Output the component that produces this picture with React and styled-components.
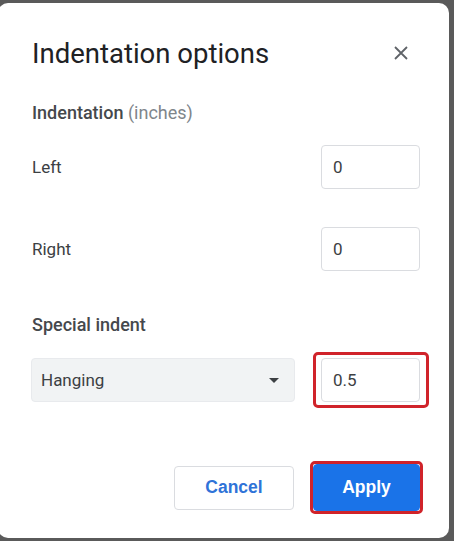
import styled, { createGlobalStyle } from 'styled-components'

const Global = createGlobalStyle`
  html, body {
    margin: 0;
    background: #5a5a5a;
    font-family: Roboto, "Liberation Sans", Arial, sans-serif;
  }
`

const Page = styled.div`
  width: 454px;
  height: 541px;
  overflow: hidden;
  padding-top: 3px;
  box-sizing: border-box;
`

const Dialog = styled.div`
  margin-left: -2px;
  width: 451px;
  height: 535px;
  background: #fff;
  border-radius: 10px;
  box-sizing: border-box;
  padding: 34px 29px 0 34px;
  display: flex;
  flex-direction: column;
`

const Header = styled.div`
  display: flex;
  align-items: center;
  justify-content: space-between;
  height: 32px;
`

const Title = styled.h1`
  margin: 0;
  font-size: 27.5px;
  font-weight: 400;
  color: #202124;
`

const Close = styled.button`
  border: 0;
  background: none;
  padding: 0;
  margin-right: 12px;
  width: 14px;
  height: 14px;
  display: flex;
`

const SectionLabel = styled.div`
  margin-top: ${(p) => p.$top}px;
  font-size: 18px;
  font-weight: 500;
  color: #45484c;

  span {
    font-weight: 400;
    color: #80868b;
  }
`

const Row = styled.div`
  display: flex;
  align-items: center;
  justify-content: space-between;
  margin-top: ${(p) => p.$top}px;
  height: 44px;
`

const Label = styled.div`
  font-size: 17px;
  color: #3c4043;
`

const Field = styled.div`
  width: 99px;
  height: 44px;
  box-sizing: border-box;
  border: 1px solid #dadce0;
  border-radius: 4px;
  padding-left: 11px;
  display: flex;
  align-items: center;
  font-size: 17px;
  color: #3c4043;
  background: #fff;
`

const Highlight = styled.div`
  border: 3px solid #d0232a;
  border-radius: 5px;
  display: flex;
  padding: ${(p) => (p.$tight ? '0' : '3px 6px 3px 5px')};
  margin: ${(p) => (p.$tight ? '-3px -3px -3px 0' : '-6px -9px -6px 0')};
`

const Select = styled.div`
  width: 264px;
  height: 44px;
  box-sizing: border-box;
  margin-left: -1px;
  background: #f1f3f4;
  border: 1px solid #e8eaed;
  border-radius: 4px;
  display: flex;
  align-items: center;
  justify-content: space-between;
  padding: 0 15px 0 9px;
  font-size: 17px;
  color: #3c4043;
`

const Caret = styled.span`
  width: 0;
  height: 0;
  border-left: 5px solid transparent;
  border-right: 5px solid transparent;
  border-top: 5px solid #3c4043;
`

const Footer = styled.div`
  margin-top: auto;
  margin-bottom: 27px;
  display: flex;
  justify-content: flex-end;
  align-items: center;
  gap: 16px;
`

const Button = styled.button`
  height: ${(p) => (p.$primary ? 47 : 44)}px;
  width: ${(p) => (p.$primary ? 107 : 120)}px;
  box-sizing: border-box;
  border-radius: 4px;
  border: 1px solid ${(p) => (p.$primary ? '#1a73e8' : '#dadce0')};
  background: ${(p) => (p.$primary ? '#1a73e8' : '#fff')};
  color: ${(p) => (p.$primary ? '#fff' : '#2f73d8')};
  font-family: "Liberation Sans", Arial, sans-serif;
  font-weight: 700;
  font-size: 17.5px;
  padding: 0;
`

export default function App() {
  return (
    <Page>
      <Global />
      <Dialog>
        <Header>
          <Title>Indentation options</Title>
          <Close aria-label="Close">
            <svg width="14" height="14" viewBox="0 0 14 14">
              <path d="M1 1L13 13M13 1L1 13" stroke="#5f6368" strokeWidth="1.8" />
            </svg>
          </Close>
        </Header>

        <SectionLabel $top={33}>
          Indentation <span>(inches)</span>
        </SectionLabel>

        <Row $top={22}>
          <Label>Left</Label>
          <Field>0</Field>
        </Row>
        <Row $top={38}>
          <Label>Right</Label>
          <Field>0</Field>
        </Row>

        <SectionLabel $top={43}>Special indent</SectionLabel>

        <Row $top={23}>
          <Select>
            Hanging
            <Caret />
          </Select>
          <Highlight>
            <Field>0.5</Field>
          </Highlight>
        </Row>

        <Footer>
          <Button>Cancel</Button>
          <Highlight $tight>
            <Button $primary>Apply</Button>
          </Highlight>
        </Footer>
      </Dialog>
    </Page>
  )
}
